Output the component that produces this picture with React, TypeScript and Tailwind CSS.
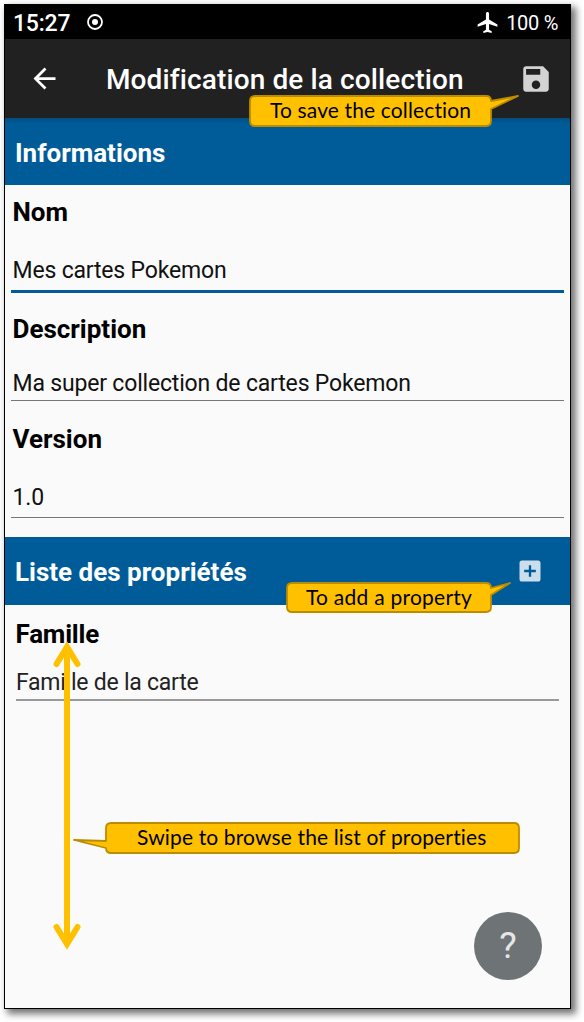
import type { ReactNode } from "react";

function Field({ label, value, labelClass, valueClass }: { label: string; value: string; labelClass: string; valueClass: string }) {
  return (
    <div className="flex flex-col">
      <label className={`font-bold text-[26px] text-black whitespace-nowrap ${labelClass}`}>{label}</label>
      <div className={`whitespace-nowrap text-[23px] ${valueClass}`}>{value}</div>
    </div>
  );
}

function Band({ title, className, children }: { title: string; className: string; children?: ReactNode }) {
  return (
    <div className={`flex shrink-0 items-center justify-between bg-[#005c99] pl-[10px] pr-[26px] ${className}`}>
      <h2 className="pt-[3px] text-[26px] font-bold whitespace-nowrap text-white">{title}</h2>
      {children}
    </div>
  );
}

function Callout({ text, className, textClass, width, path }: { text: string; className: string; textClass: string; width: number; path: string }) {
  return (
    <div className={`absolute flex ${className}`}>
      <svg className="absolute inset-0 overflow-visible" width={width} height="33" fill="#ffc000" stroke="#bc8c00" strokeWidth="1.8" strokeLinejoin="round">
        <path d={path} />
      </svg>
      <span className={`relative whitespace-nowrap font-['Lato',sans-serif] text-[21px] leading-[30px] text-black [font-variant-ligatures:none] ${textClass}`}>{text}</span>
    </div>
  );
}

export default function App() {
  return (
    <div className="h-[1022px] w-[584px] overflow-hidden bg-white pt-1 pl-1 font-['Roboto',sans-serif]">
      <div className="relative flex h-[1005px] w-[567px] flex-col border border-black bg-[#fafafa] shadow-[4px_4px_7px_1px_rgba(0,0,0,0.55)]">
        <div className="flex h-[34px] shrink-0 items-center justify-between bg-black pr-3 pl-2 text-white">
          <div className="flex items-center gap-[16px]">
            <span className="pt-[3px] text-[23px] leading-[31px] font-medium tracking-[-0.200px]">15:27</span>
            <svg width="18" height="18" viewBox="0 0 18 18">
              <circle cx="9" cy="9" r="7" fill="none" stroke="white" strokeWidth="1.8" />
              <circle cx="9" cy="9" r="3" fill="white" />
            </svg>
          </div>
          <div className="flex items-center gap-[6px]">
            <svg width="25" height="25" viewBox="0 0 24 24" fill="white">
              <path d="M21.5 16v-2l-8-5V3.500C13.500 2.670 12.830 2 12 2s-1.500.670-1.500 1.500V9l-8 5v2l8-2.500V19l-2.500 1.500V22l4-1 4 1v-1.500L13.500 19v-5.500l8 2.500z" />
            </svg>
            <span className="pt-[2px] text-[20px] tracking-[-0.300px]">100 %</span>
          </div>
        </div>
        <header className="flex h-[79px] shrink-0 items-center bg-[#212121] text-white">
          <svg className="ml-[23px] shrink-0" width="33" height="33" viewBox="0 0 24 24" fill="white">
            <path d="M20 11H7.830l5.590-5.590L12 4l-8 8 8 8 1.410-1.410L7.830 13H20v-2z" />
          </svg>
          <h1 className="ml-[45px] pt-[3px] text-[28px] font-medium tracking-[0.120px] whitespace-nowrap">Modification de la collection</h1>
          <svg className="ml-auto mr-[17px] shrink-0" width="34" height="34" viewBox="0 0 24 24" fill="#d3d3d3">
            <path d="M17 3H5c-1.110 0-2 .9-2 2v14c0 1.100.890 2 2 2h14c1.100 0 2-.9 2-2V7l-4-4zm-5 16c-1.660 0-3-1.340-3-3s1.340-3 3-3 3 1.340 3 3-1.340 3-3 3zm3-10H5V5h10v4z" />
          </svg>
        </header>
        <Band title="Informations" className="h-[67px] bg-[linear-gradient(#004d80,#005c99_6px)]" />
        <div className="flex flex-col pr-[6px] pl-[6px]">
          <Field label="Nom" value="Mes cartes Pokemon" labelClass="pl-[1.500px] leading-[54px]" valueClass="h-[54px] border-b-3 border-[#005c99] pl-[1.500px] leading-[63px] tracking-[-0.180px] text-[#111]" />
          <Field label="Description" value="Ma super collection de cartes Pokemon" labelClass="pl-[1.500px] leading-[72px]" valueClass="h-9 border-b border-[#777] pl-[1.500px] leading-[37px] tracking-[-0.180px] text-[#111]" />
          <Field label="Version" value="1.0" labelClass="pl-[1.500px] leading-[76px]" valueClass="h-[41px] border-b border-[#777] pl-[1.500px] leading-[41px] tracking-[-0.180px] text-[#111]" />
        </div>
        <Band title="Liste des propriétés" className="mt-[19px] h-[68px]">
          <svg width="28" height="28" viewBox="0 0 24 24" fill="#ccdeeb">
            <path d="M19 3H5c-1.110 0-2 .9-2 2v14c0 1.100.890 2 2 2h14c1.100 0 2-.9 2-2V5c0-1.100-.9-2-2-2zm-2 10h-4v4h-2v-4H7v-2h4V7h2v4h4v2z" />
          </svg>
        </Band>
        <div className="flex flex-col pr-[11px] pl-[11px]">
          <Field label="Famille" value="Famille de la carte" labelClass="-ml-[0.500px] leading-[58px] tracking-[-0.200px]" valueClass="h-[38px] border-b-2 border-[#999] leading-[40px] text-[#222] tracking-[-0.240px]" />
        </div>
        <button className="absolute right-[28px] bottom-[28px] flex size-[68px] items-center justify-center rounded-full bg-[#6e7376] text-[37px] text-[#e6e6e6]">?</button>
        <svg className="absolute top-[636px] left-[47px]" width="30" height="310" fill="none" stroke="#ffc000" strokeWidth="6" strokeLinecap="round">
          <path d="M15 8V302" />
          <path d="M4.500 23L15 6L25.500 23M4.500 286L15 303L25.500 286" strokeLinejoin="miter" />
        </svg>
        <Callout text="To save the collection" className="top-[90px] left-[244px]" width={242} textClass="left-[21px] tracking-[0.140px]" path="M6 1H237Q242 1 242 6L269 1L242 14V26Q242 31 237 31H6Q1 31 1 26V6Q1 1 6 1Z" />
        <Callout text="To add a property" className="top-[577px] left-[281px]" width={206} textClass="left-[20px] tracking-[0.240px]" path="M6 1H200Q205 1 205 6L224 1L205 13V25Q205 30 200 30H6Q1 30 1 25V6Q1 1 6 1Z" />
        <Callout text="Swipe to browse the list of properties" className="top-[817px] left-[100px]" width={415} textClass="left-[32px] tracking-[0.140px]" path="M6 1H409Q414 1 414 6V26Q414 31 409 31H6Q1 31 1 26L-31 18L1 19V6Q1 1 6 1Z" />
      </div>
    </div>
  );
}
